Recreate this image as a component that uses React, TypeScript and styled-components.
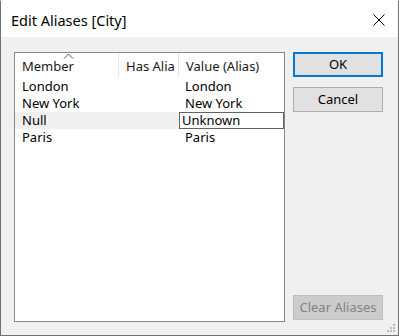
import styled, { createGlobalStyle } from 'styled-components';

const GlobalStyle = createGlobalStyle`
  html, body {
    margin: 0;
    padding: 0;
    background: #ffffff;
  }
  * {
    box-sizing: border-box;
  }
`;

const Window = styled.div`
  position: relative;
  width: 399px;
  height: 336px;
  display: flex;
  flex-direction: column;
  border: 1px solid #707070;
  border-top-color: #ffffff;
  font-family: "Noto Sans", "Open Sans", sans-serif;
  font-size: 13px;
  color: #000000;
`;

const TitleBar = styled.div`
  height: 36px;
  flex: none;
  display: flex;
  align-items: center;
  justify-content: space-between;
  background: #ffffff;
  padding: 2px 12px 0 10px;
`;

const Title = styled.span`
  font-size: 14.5px;
  color: #000000;
`;

const CloseButton = styled.svg`
  width: 14px;
  height: 14px;
`;

const Body = styled.div`
  flex: 1;
  display: flex;
  gap: 8px;
  background: #f0f0f0;
  padding: 15px 15px 13px 13px;
`;

const ListBox = styled.div`
  width: 271px;
  display: flex;
  flex-direction: column;
  background: #ffffff;
  border: 1px solid #828790;
`;

const HeaderRow = styled.div`
  position: relative;
  display: grid;
  grid-template-columns: 104px 60px 1fr;
  height: 24px;
  margin-bottom: 1px;
`;

const HeaderCell = styled.div`
  display: flex;
  align-items: center;
  padding: 2px 0 0 7px;
  overflow: hidden;
  white-space: nowrap;
  border-right: 1px solid #e5e5e5;
  color: #1a1a1a;

  &:last-child {
    border-right: none;
  }
`;

const SortCaret = styled.svg`
  position: absolute;
  left: 48px;
  top: 0px;
  width: 11px;
  height: 6px;
`;

const Row = styled.div<{ $selected?: boolean }>`
  display: grid;
  grid-template-columns: 164px 1fr;
  grid-template-rows: 17px;
  height: 17px;
  background: ${({ $selected }) => ($selected ? '#f0f0f0' : 'transparent')};
`;

const Cell = styled.div`
  display: flex;
  align-items: center;
  padding-left: 7px;
  white-space: nowrap;
  line-height: 17px;
`;

const ValueCell = styled(Cell)`
  padding-left: 6px;
  background: #ffffff;
`;

const EditBox = styled.div`
  display: flex;
  align-items: center;
  padding-left: 2px;
  line-height: 15px;
  background: #ffffff;
  border: 1px solid #646464;
  white-space: nowrap;
`;

const ButtonColumn = styled.div`
  width: 90px;
  display: flex;
  flex-direction: column;
  gap: 10px;
  padding-bottom: 2px;
`;

const Button = styled.div<{ $primary?: boolean; $disabled?: boolean }>`
  height: 25px;
  display: flex;
  align-items: center;
  justify-content: center;
  background: ${({ $disabled }) => ($disabled ? '#cccccc' : '#e1e1e1')};
  border: ${({ $primary, $disabled }) =>
    $primary ? '2px solid #0078d7' : $disabled ? '1px solid #bfbfbf' : '1px solid #adadad'};
  color: ${({ $disabled }) => ($disabled ? '#838383' : '#000000')};
  padding-bottom: 1px;
`;

const Spacer = styled.div`
  flex: 1;
`;

const Grip = styled.svg`
  position: absolute;
  right: 2px;
  bottom: 2px;
  width: 9px;
  height: 9px;
`;

const rows = [
  { member: 'London', value: 'London' },
  { member: 'New York', value: 'New York' },
  { member: 'Null', value: 'Unknown', editing: true },
  { member: 'Paris', value: 'Paris' },
];

export default function App() {
  return (
    <>
      <GlobalStyle />
      <Window>
        <TitleBar>
          <Title>Edit Aliases [City]</Title>
          <CloseButton viewBox="0 0 14 14">
            <path d="M1.5 1.5 L12.5 12.5 M12.5 1.5 L1.5 12.5" stroke="#000" strokeWidth="1" fill="none" />
          </CloseButton>
        </TitleBar>
        <Body>
          <ListBox>
            <HeaderRow>
              <SortCaret viewBox="0 0 11 6">
                <path d="M1 5.5 L5.5 1 L10 5.5" stroke="#555" strokeWidth="1" fill="none" />
              </SortCaret>
              <HeaderCell>Member</HeaderCell>
              <HeaderCell>Has Alia</HeaderCell>
              <HeaderCell>Value (Alias)</HeaderCell>
            </HeaderRow>
            {rows.map((r) => (
              <Row key={r.member} $selected={r.editing}>
                <Cell>{r.member}</Cell>
                {r.editing ? <EditBox>{r.value}</EditBox> : <ValueCell>{r.value}</ValueCell>}
              </Row>
            ))}
          </ListBox>
          <ButtonColumn>
            <Button $primary>OK</Button>
            <Button>Cancel</Button>
            <Spacer />
            <Button $disabled>Clear Aliases</Button>
          </ButtonColumn>
        </Body>
        <Grip viewBox="0 0 9 9">
          {[
            [6, 0],
            [3, 3],
            [6, 3],
            [0, 6],
            [3, 6],
            [6, 6],
          ].map(([x, y]) => (
            <rect key={`${x}-${y}`} x={x} y={y} width="2" height="2" fill="#bcbcbc" />
          ))}
        </Grip>
      </Window>
    </>
  );
}
